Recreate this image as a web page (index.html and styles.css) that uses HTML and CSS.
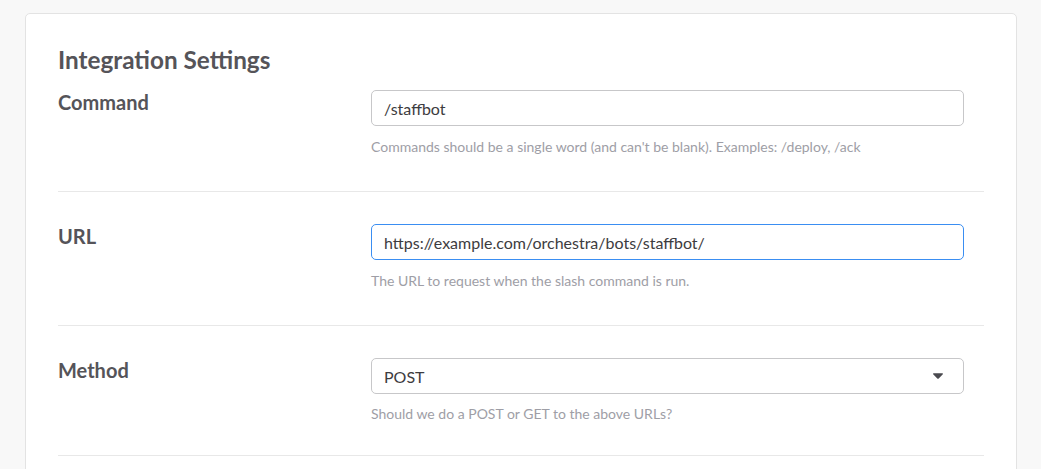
FILE: index.html
```html
<!DOCTYPE html>
<html lang="en">
<head>
<meta charset="utf-8">
<title>Integration Settings</title>
<link rel="stylesheet" href="styles.css">
</head>
<body>
<div class="card">
  <h2 class="card-title">Integration Settings</h2>
  <div class="field-row first">
    <label class="field-label" for="cmd">Command</label>
    <div class="field-control">
      <input class="text-input" id="cmd" type="text" value="/staffbot">
      <p class="help">Commands should be a single word (and can't be blank). Examples: /deploy, /ack</p>
    </div>
  </div>
  <div class="field-row">
    <label class="field-label" for="url">URL</label>
    <div class="field-control">
      <input class="text-input focused" id="url" type="text" value="https://example.com/orchestra/bots/staffbot/">
      <p class="help">The URL to request when the slash command is run.</p>
    </div>
  </div>
  <div class="field-row last">
    <div class="field-label">Method</div>
    <div class="field-control">
      <div class="select-box">
        <span class="select-value">POST</span>
        <svg class="caret" width="10" height="6" viewBox="12 190 296 172" aria-hidden="true"><path fill="#4a4a4f" d="M31.3 192h257.3c17.8 0 26.7 21.5 14.1 34.1L174.1 354.8c-7.8 7.8-20.5 7.8-28.3 0L17.2 226.1C4.6 213.5 13.5 192 31.3 192z"/></svg>
      </div>
      <p class="help">Should we do a POST or GET to the above URLs?</p>
    </div>
  </div>
</div>
</body>
</html>
```
FILE: styles.css
```css
* { box-sizing: border-box; }

body {
  margin: 0;
  background: #f8f8f8;
  font-family: Lato, "Open Sans", sans-serif;
  color: #555459;
}

.card {
  margin: 13px 24px 0 25px;
  background: #fff;
  border: 1px solid #e3e3e3;
  border-radius: 5px;
  padding: 31px 32px 60px;
}

.card-title {
  margin: 0 0 15px;
  font-size: 24.3px;
  line-height: 30px;
  font-weight: 700;
  color: #555459;
}

.field-row {
  display: grid;
  grid-template-columns: 313px 593px;
  align-items: start;
  padding: 32px 0 34px;
  border-bottom: 1px solid #e8e8e8;
}

.field-row.first { padding-top: 0; }
.field-row.last { padding-bottom: 31px; }

.field-label {
  font-size: 20px;
  line-height: 24px;
  font-weight: 700;
  color: #555459;
}

.text-input,
.select-box {
  display: block;
  width: 100%;
  height: 36px;
  margin: 0;
  padding: 0 12px;
  border: 1px solid #c7c7c9;
  border-radius: 5px;
  background: #fff;
  font-family: Lato, "Open Sans", sans-serif;
  font-size: 16px;
  color: #3d3c40;
  outline: none;
}

.text-input.focused {
  border-color: #3a8ef2;
}

.select-box {
  display: flex;
  align-items: center;
  justify-content: space-between;
  padding: 0 20px 0 12px;
}

.caret { display: block; }

.help {
  margin: 11px 0 0;
  font-size: 14px;
  line-height: 20px;
  color: #9e9ea6;
}

.field-row.last .help { margin-top: 10px; }
```
